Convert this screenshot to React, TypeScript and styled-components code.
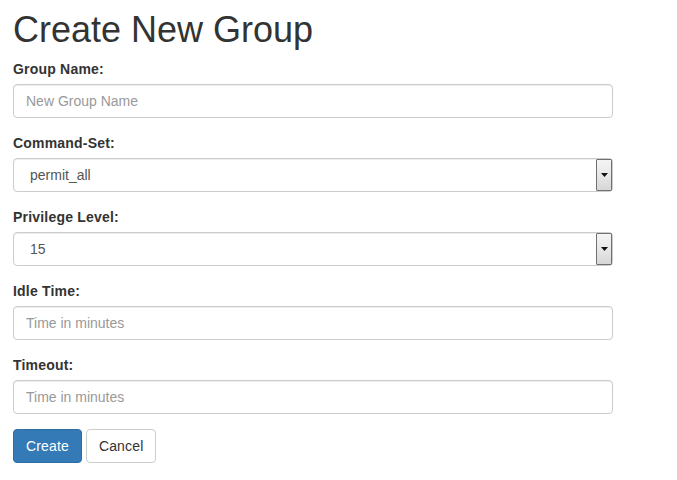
import React from "react";
import styled, { createGlobalStyle } from "styled-components";

const GlobalStyle = createGlobalStyle`
  html, body {
    margin: 0;
    padding: 0;
    background: #fff;
  }
  body {
    font-family: "Liberation Sans", Arial, Helvetica, sans-serif;
    font-size: 14px;
    line-height: 1.42857143;
    color: #333;
  }
  * { box-sizing: border-box; }
`;

const Page = styled.div`
  padding: 0 0 0 13px;
  width: 613px;
`;

const Title = styled.h1`
  font-size: 36px;
  font-weight: 500;
  line-height: 1.1;
  margin: 10px 0 9px;
  color: #333;
`;

const Form = styled.form`
  display: flex;
  flex-direction: column;
`;

const Group = styled.div`
  display: flex;
  flex-direction: column;
  margin-bottom: 15px;
`;

const Label = styled.label`
  font-weight: 700;
  font-size: 14px;
  line-height: 20px;
  letter-spacing: 0.2px;
  margin-bottom: 5px;
`;

const Input = styled.input`
  display: block;
  width: 100%;
  height: 34px;
  padding: 6px 12px;
  font-family: inherit;
  font-size: 14px;
  line-height: 1.42857143;
  color: #555;
  background: #fff;
  border: 1px solid #ccc;
  border-radius: 4px;
  box-shadow: inset 0 1px 1px rgba(0, 0, 0, 0.075);
  outline: none;
  &::placeholder {
    color: #999;
  }
`;

const SelectWrap = styled.div`
  position: relative;
  width: 100%;
`;

const Select = styled.select`
  display: block;
  width: 100%;
  height: 34px;
  padding: 6px 24px 6px 16px;
  font-family: inherit;
  font-size: 14px;
  color: #555;
  background: #fff;
  border: 1px solid #ccc;
  border-radius: 4px;
  box-shadow: inset 0 1px 1px rgba(0, 0, 0, 0.075);
  appearance: none;
  -webkit-appearance: none;
  outline: none;
`;

const ArrowBox = styled.span`
  position: absolute;
  top: 1px;
  right: 1px;
  width: 16px;
  height: 32px;
  display: flex;
  align-items: center;
  justify-content: center;
  border: 1px solid #707070;
  border-radius: 1px;
  background: linear-gradient(to bottom, #f4f4f4 0%, #e8e8e8 50%, #d6d6d6 100%);
  pointer-events: none;
`;

const Actions = styled.div`
  display: flex;
  gap: 4px;
`;

const Button = styled.button<{ $primary?: boolean }>`
  height: 34px;
  padding: 6px 12px;
  font-family: inherit;
  font-size: 14px;
  line-height: 1.42857143;
  letter-spacing: 0.15px;
  border-radius: 4px;
  border: 1px solid ${(p) => (p.$primary ? "#2e6da4" : "#ccc")};
  background: ${(p) => (p.$primary ? "#337ab7" : "#fff")};
  color: ${(p) => (p.$primary ? "#fff" : "#333")};
  cursor: pointer;
`;

const Arrow = () => (
  <svg width="7" height="4" viewBox="0 0 7 4">
    <polygon points="0,0 7,0 3.5,4" fill="#111" />
  </svg>
);

export default function App() {
  return (
    <>
      <GlobalStyle />
      <Page>
        <Title>Create New Group</Title>
        <Form onSubmit={(e) => e.preventDefault()}>
          <Group>
            <Label>Group Name:</Label>
            <Input placeholder="New Group Name" />
          </Group>
          <Group>
            <Label>Command-Set:</Label>
            <SelectWrap>
              <Select defaultValue="permit_all">
                <option value="permit_all">permit_all</option>
              </Select>
              <ArrowBox>
                <Arrow />
              </ArrowBox>
            </SelectWrap>
          </Group>
          <Group>
            <Label>Privilege Level:</Label>
            <SelectWrap>
              <Select defaultValue="15">
                <option value="15">15</option>
              </Select>
              <ArrowBox>
                <Arrow />
              </ArrowBox>
            </SelectWrap>
          </Group>
          <Group>
            <Label>Idle Time:</Label>
            <Input placeholder="Time in minutes" />
          </Group>
          <Group>
            <Label>Timeout:</Label>
            <Input placeholder="Time in minutes" />
          </Group>
          <Actions>
            <Button $primary type="submit">Create</Button>
            <Button type="button">Cancel</Button>
          </Actions>
        </Form>
      </Page>
    </>
  );
}
